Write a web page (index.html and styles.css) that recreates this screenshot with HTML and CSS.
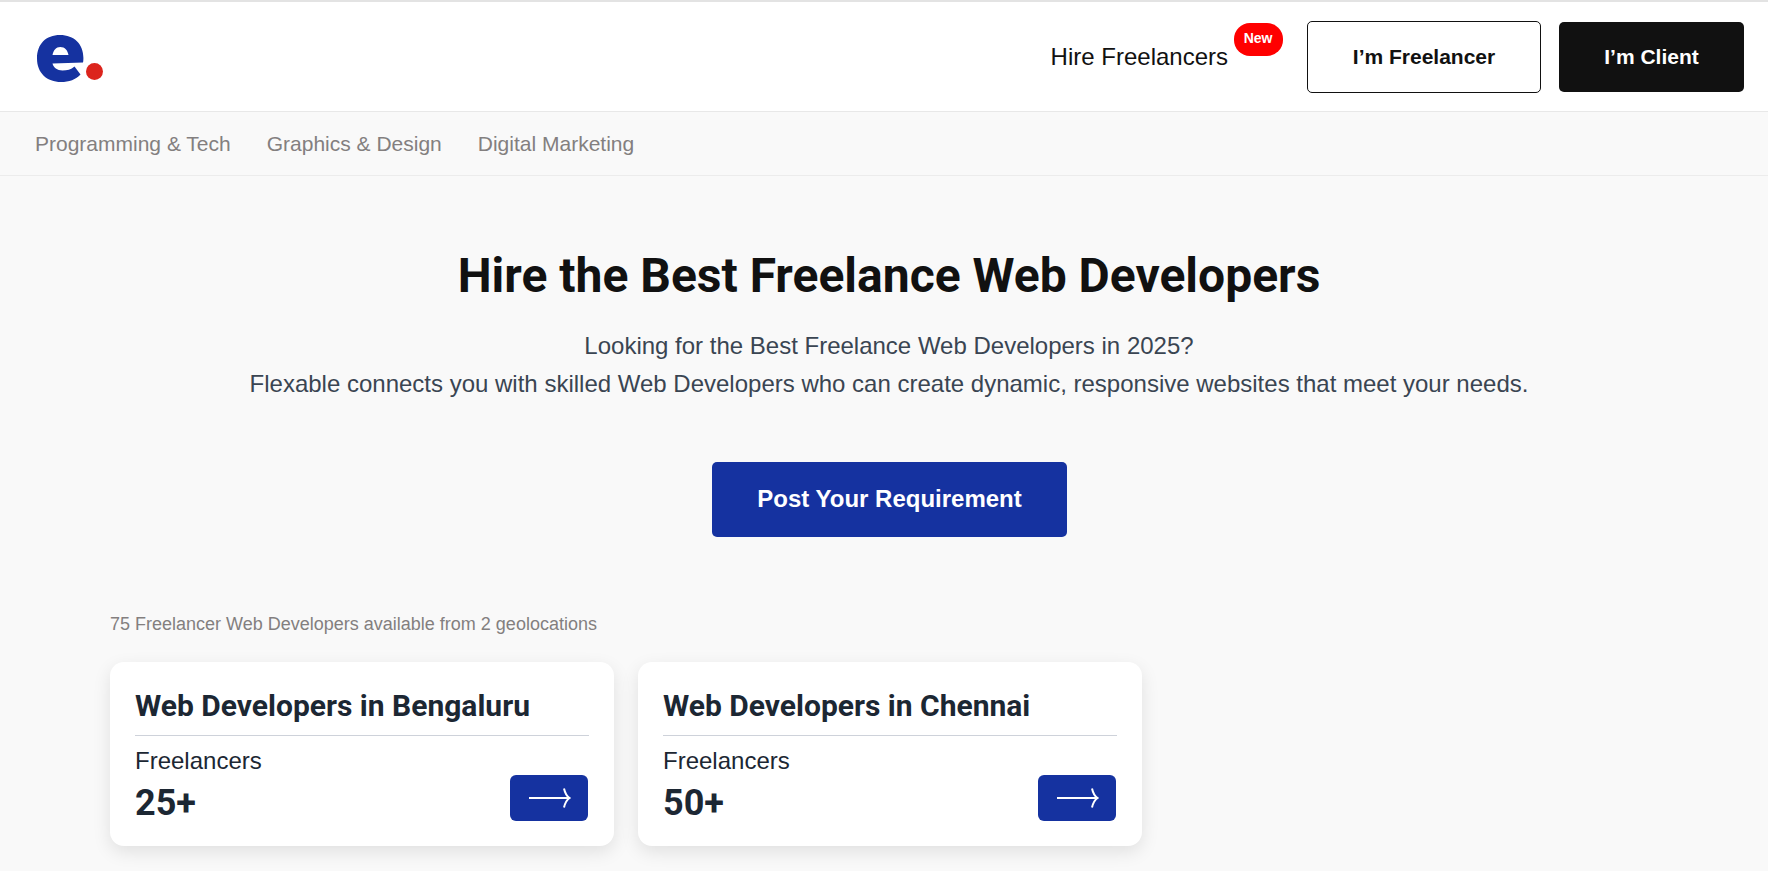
FILE: index.html
```html
<!DOCTYPE html>
<html lang="en">
<head>
  <meta charset="UTF-8">
  <meta name="viewport" content="width=device-width, initial-scale=1.0">
  <title>Hire the Best Freelance Web Developers</title>
  <link rel="stylesheet" href="styles.css">
</head>
<body>
  <header class="topbar">
    <svg class="logo" viewBox="0 0 70 50" width="70" height="50" aria-label="Flexable">
      <path fill="#1532a0" fill-rule="evenodd" d="M24 2C10 2 1 11 1 25.500C1 40 11 49 25 49C33 49 40 46.500 44.500 41.500L38.500 33.500C35 36.500 31 37.500 26.500 37.500C21 37.500 17.500 34.500 16.500 30.500L47 29.500C47.300 28.500 47.400 26.800 47.400 25C47.400 11 38 2 24 2ZM16.500 22C17.500 17 20 14 24.300 14C29 14 31.500 17 32.500 22Z"/>
      <circle fill="#dc241c" cx="58.500" cy="38.500" r="8.500"/>
    </svg>
    <div class="topbar-right">
      <a class="hire-link">Hire Freelancers<span class="badge">New</span></a>
      <a class="btn btn-outline">I’m Freelancer</a>
      <a class="btn btn-dark">I’m Client</a>
    </div>
  </header>

  <nav class="catnav">
    <a>Programming &amp; Tech</a>
    <a>Graphics &amp; Design</a>
    <a>Digital Marketing</a>
  </nav>

  <section class="hero">
    <h1>Hire the Best Freelance Web Developers</h1>
    <p>Looking for the Best Freelance Web Developers in 2025?<br>Flexable connects you with skilled Web Developers who can create dynamic, responsive websites that meet your needs.</p>
    <a class="post-btn">Post Your Requirement</a>
  </section>

  <section class="listing">
    <div class="count">75 Freelancer Web Developers available from 2 geolocations</div>
    <div class="cards">
      <div class="card">
        <h2>Web Developers in Bengaluru</h2>
        <div class="card-body">
          <div>
            <div class="card-label">Freelancers</div>
            <div class="card-num">25+</div>
          </div>
          <a class="arrow-btn">
            <svg viewBox="0 0 44 22" width="44" height="22"><path d="M2 11H42M37 1.500C38 6 39.500 9 42.500 11C39.500 13 38 16 37 20.500" fill="none" stroke="#fff" stroke-width="2"/></svg>
          </a>
        </div>
      </div>
      <div class="card">
        <h2>Web Developers in Chennai</h2>
        <div class="card-body">
          <div>
            <div class="card-label">Freelancers</div>
            <div class="card-num">50+</div>
          </div>
          <a class="arrow-btn">
            <svg viewBox="0 0 44 22" width="44" height="22"><path d="M2 11H42M37 1.500C38 6 39.500 9 42.500 11C39.500 13 38 16 37 20.500" fill="none" stroke="#fff" stroke-width="2"/></svg>
          </a>
        </div>
      </div>
    </div>
  </section>
</body>
</html>
```

FILE: styles.css
```css
html, body {
  height: 100%;
}
body {
  margin: 0;
  overflow: hidden;
  background-color: #f9f9f9;
  font-family: "Liberation Sans", Arial, sans-serif;
  color: #111;
}

.topbar {
  display: flex;
  justify-content: space-between;
  align-items: center;
  height: 109px;
  padding: 0 24px 0 36px;
  background-color: #fff;
  border-top: 2px solid #e3e3e3;
  border-bottom: 1px solid #e8e8e8;
}
.logo {
  display: block;
  margin-top: 2px;
}
.topbar-right {
  display: flex;
  align-items: center;
}
.hire-link {
  position: relative;
  font-size: 24px;
  margin-right: 79px;
}
.badge {
  position: absolute;
  left: 183px;
  top: -20px;
  width: 49px;
  height: 33px;
  line-height: 31px;
  text-align: center;
  background-color: #ff0000;
  color: #fff;
  font-size: 14px;
  font-weight: 700;
  border-radius: 16px;
}
.btn {
  display: flex;
  justify-content: center;
  align-items: center;
  box-sizing: border-box;
  font-size: 21px;
  font-weight: 700;
  border-radius: 5px;
}
.btn-outline {
  width: 234px;
  height: 72px;
  margin-right: 18px;
  background-color: #fff;
  border: 1px solid #111;
}
.btn-dark {
  width: 185px;
  height: 70px;
  background-color: #111;
  color: #fff;
}

.catnav {
  display: flex;
  gap: 36px;
  box-sizing: border-box;
  height: 64px;
  align-items: center;
  padding: 1px 0 0 35px;
  border-bottom: 1px solid #ececec;
}
.catnav a {
  font-size: 21px;
  color: #837f7f;
}

.hero {
  display: flex;
  flex-direction: column;
  align-items: center;
  padding-left: 10px;
  text-align: center;
}
.hero h1 {
  margin: 72px 0 0;
  font-family: Roboto, sans-serif;
  font-size: 48px;
  line-height: 56px;
  font-weight: 700;
}
.hero p {
  margin: 23px 0 0;
  font-size: 24px;
  line-height: 38px;
  color: #3a4552;
}
.post-btn {
  display: flex;
  justify-content: center;
  align-items: center;
  box-sizing: border-box;
  width: 355px;
  height: 75px;
  margin-top: 59px;
  padding: 0 0 2px 1px;
  background-color: #1532a0;
  color: #fff;
  font-size: 24px;
  font-weight: 700;
  border-radius: 5px;
}

.listing {
  padding: 0 0 0 110px;
}
.count {
  margin-top: 75px;
  font-size: 18px;
  line-height: 24px;
  color: #837f7f;
}
.cards {
  display: flex;
  gap: 24px;
  margin-top: 26px;
}
.card {
  box-sizing: border-box;
  width: 504px;
  height: 184px;
  padding: 25px 25px 0;
  background-color: #fff;
  border-radius: 14px;
  box-shadow: 0 6px 18px rgba(0, 0, 0, 0.1);
}
.card h2 {
  margin: 0;
  padding-bottom: 10px;
  font-family: Roboto, sans-serif;
  font-size: 30px;
  line-height: 38px;
  font-weight: 700;
  color: #1c2733;
  border-bottom: 1px solid #ced2da;
}
.card-body {
  display: flex;
  justify-content: space-between;
  align-items: flex-end;
}
.card-label {
  margin-top: 10px;
  font-size: 24px;
  line-height: 30px;
  color: #1c2733;
}
.card-num {
  margin-top: 4px;
  font-family: Roboto, sans-serif;
  font-size: 36px;
  line-height: 46px;
  font-weight: 700;
  color: #1c2733;
}
.arrow-btn {
  display: flex;
  justify-content: center;
  align-items: center;
  width: 78px;
  height: 46px;
  margin: 0 1px 5px 0;
  background-color: #1532a0;
  border-radius: 6px;
}
```
